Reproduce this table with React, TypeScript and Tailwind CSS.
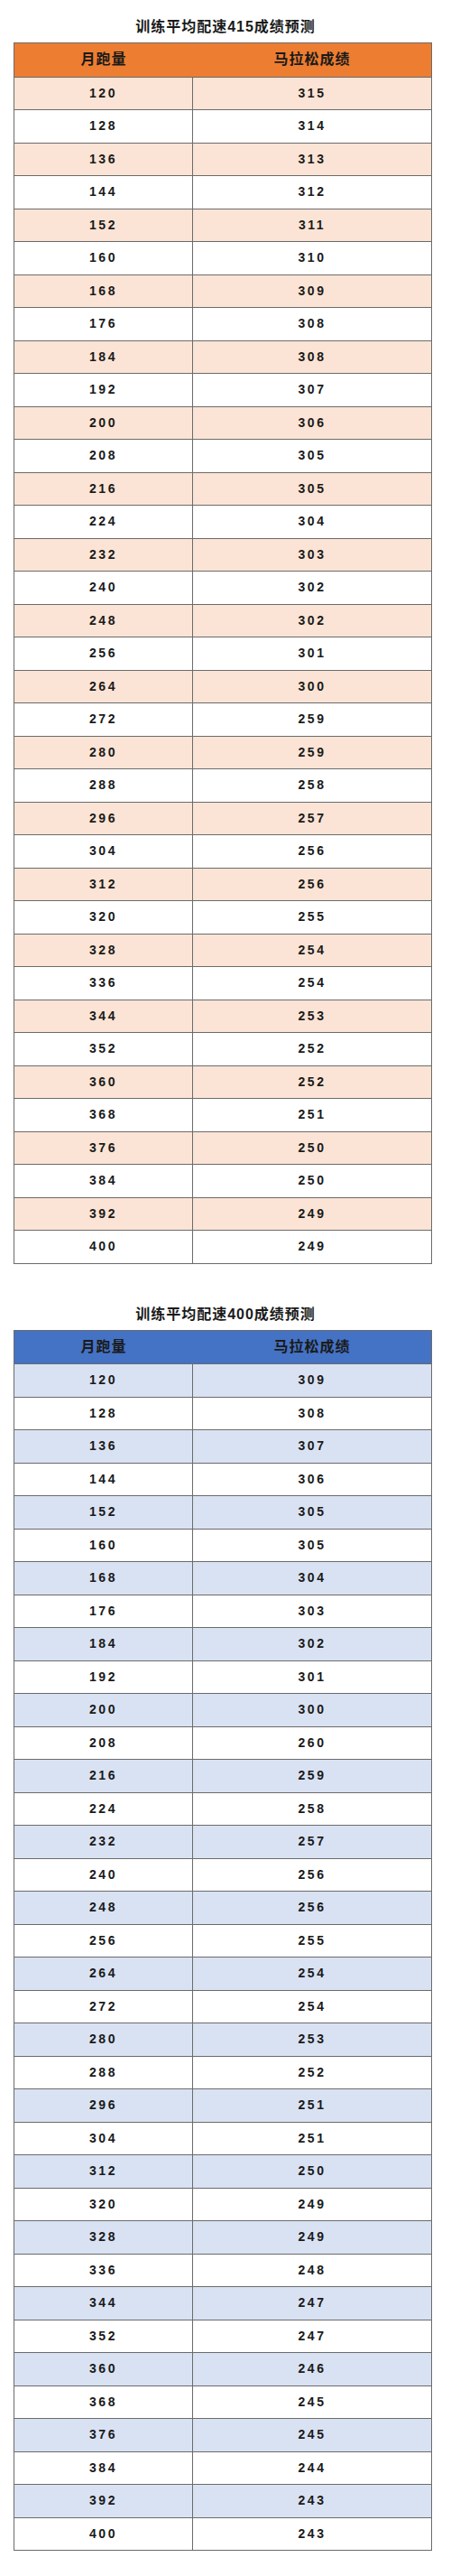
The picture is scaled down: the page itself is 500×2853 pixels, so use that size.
const months = [
  120, 128, 136, 144, 152, 160, 168, 176, 184, 192, 200, 208, 216, 224, 232, 240, 248, 256,
  264, 272, 280, 288, 296, 304, 312, 320, 328, 336, 344, 352, 360, 368, 376, 384, 392, 400,
];

const results415 = [
  315, 314, 313, 312, 311, 310, 309, 308, 308, 307, 306, 305, 305, 304, 303, 302, 302, 301,
  300, 259, 259, 258, 257, 256, 256, 255, 254, 254, 253, 252, 252, 251, 250, 250, 249, 249,
];

const results400 = [
  309, 308, 307, 306, 305, 305, 304, 303, 302, 301, 300, 260, 259, 258, 257, 256, 256, 255,
  254, 254, 253, 252, 251, 251, 250, 249, 249, 248, 247, 247, 246, 245, 245, 244, 243, 243,
];

const font = { fontFamily: '"Liberation Sans", "Noto Sans CJK SC", sans-serif' };

type Theme = { header: string; stripe: string };

const orange: Theme = { header: "bg-[#ed7d31]", stripe: "bg-[#fbe4d5]" };
const blue: Theme = { header: "bg-[#4472c4]", stripe: "bg-[#d9e2f3]" };

const PaceTable = ({ title, results, theme }: { title: string; results: number[]; theme: Theme }) => (
  <section>
    <div className="h-[47px] pt-[13px] flex items-center justify-center">
      <h2 className="text-[16px] font-bold tracking-[1px] text-[#1a1a1a]">{title}</h2>
    </div>
    <div className="mx-[15px] w-[464px] border border-[#6b6b6b]">
      {/* Header */}
      <div className={`flex h-[36.5px] items-center text-[16px] font-bold tracking-[1px] text-[#1a1a1a] ${theme.header}`}>
        <div className="w-[198px] text-center">月跑量</div>
        <div className="flex-1 text-center">马拉松成绩</div>
      </div>
      {months.map((m, i) => (
        <div
          key={m}
          className={`flex h-[36.5px] border-t border-[#6b6b6b] text-[14px] font-bold tracking-[2.5px] text-[#1a1a1a] ${
            i % 2 === 0 ? theme.stripe : "bg-white"
          }`}
        >
          <div className="w-[198px] border-r border-[#6b6b6b] flex items-center justify-center">{m}</div>
          <div className="flex-1 flex items-center justify-center">{results[i]}</div>
        </div>
      ))}
    </div>
  </section>
);

export default function App() {
  return (
    <div className="w-[500px] h-[2853px] bg-white" style={font}>
      <PaceTable title="训练平均配速415成绩预测" results={results415} theme={orange} />
      <div className="mt-[26px]">
        <PaceTable title="训练平均配速400成绩预测" results={results400} theme={blue} />
      </div>
    </div>
  );
}
